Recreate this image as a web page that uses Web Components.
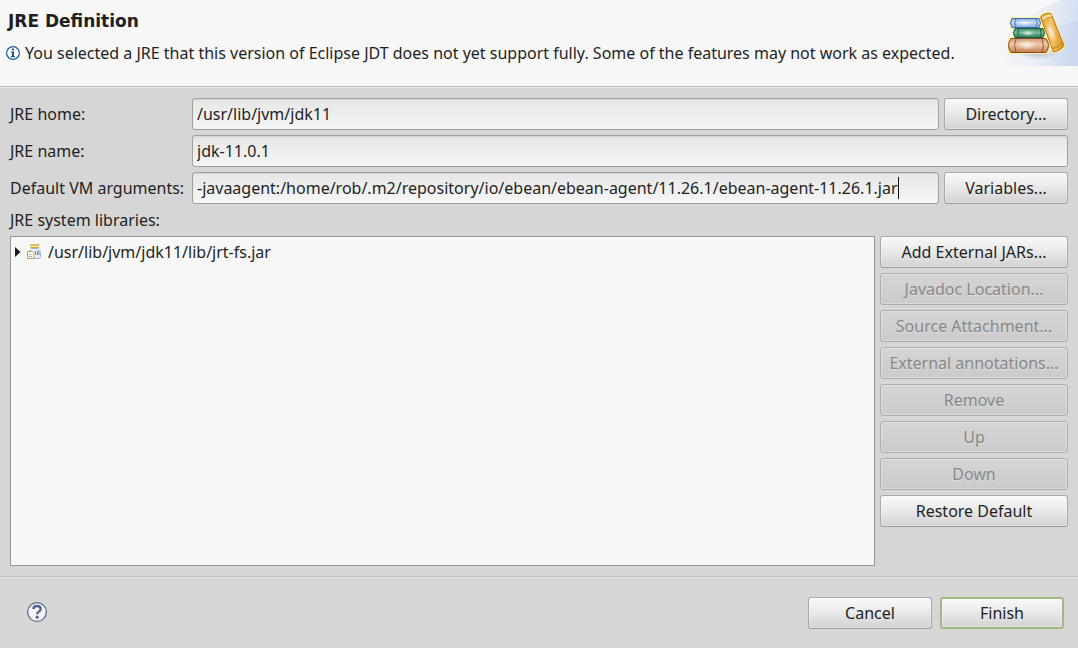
<!DOCTYPE html>
<html lang="en">
<head>
<meta charset="utf-8">
<title>JRE Definition</title>
<style>
  html, body { margin: 0; }
  body {
    font: 16px/22px "Noto Sans", "Open Sans", sans-serif;
    color: #1f1f1f;
    background: #d6d6d6;
  }
</style>
</head>
<body>
<jre-wizard></jre-wizard>

<template id="wizard-banner">
  <style>
    :host { display: flex; justify-content: space-between; min-height: 86px; background: #f7f7f7; border-bottom: 1px solid #bcbcbc; box-shadow: 0 1px #e4e4e4; }
    .text { padding: 9px 0 0 8px; }
    h1 { margin: 0; font: 700 17px/24px "DejaVu Sans", sans-serif; }
    p { margin: 9px 0 0 -3px; display: flex; align-items: center; gap: 4px; }
    .info { flex: none; width: 16px; height: 16px; }
    .art { flex: none; width: 75px; height: 66px; }
  </style>
  <div class="text">
    <h1><slot name="title"></slot></h1>
    <p>
      <svg class="info" viewBox="0 0 16 16" aria-hidden="true">
        <circle cx="8" cy="8" r="6.4" fill="#fff" stroke="#1c5a96" stroke-width="1.2"/>
        <path d="M7 3.6h2v1.8H7zM6 6.6h3v4.4h1v1.2H6V11h1V7.8H6z" fill="#1c5a96"/>
      </svg>
      <span><slot></slot></span>
    </p>
  </div>
  <svg class="art" viewBox="0 0 75 66" aria-hidden="true">
    <defs>
      <linearGradient id="sky" x1="0" y1="0" x2="1" y2="0.1"><stop offset="0" stop-color="#f5f6f8"/><stop offset=".5" stop-color="#eceff6"/><stop offset="1" stop-color="#cbd8ef"/></linearGradient>
      <linearGradient id="blue" x1="0" y1="0" x2="0" y2="1"><stop offset="0" stop-color="#8fb2e4"/><stop offset=".45" stop-color="#c3d8f5"/><stop offset="1" stop-color="#85a9de"/></linearGradient>
      <linearGradient id="green" x1="0" y1="0" x2="0" y2="1"><stop offset="0" stop-color="#42936d"/><stop offset=".45" stop-color="#79b898"/><stop offset="1" stop-color="#2b7c56"/></linearGradient>
      <linearGradient id="brown" x1="0" y1="0" x2="0" y2="1"><stop offset="0" stop-color="#d29a74"/><stop offset=".4" stop-color="#eec9ae"/><stop offset="1" stop-color="#c07c50"/></linearGradient>
      <linearGradient id="gold" x1="0" y1="0" x2="1" y2="0"><stop offset="0" stop-color="#e0a035"/><stop offset=".45" stop-color="#f3c468"/><stop offset="1" stop-color="#dc9424"/></linearGradient>
      <radialGradient id="shade"><stop offset="0" stop-color="#a9adb9"/><stop offset="1" stop-color="#a9adb9" stop-opacity="0"/></radialGradient>
      <radialGradient id="shine"><stop offset="0" stop-color="#fff" stop-opacity=".8"/><stop offset="1" stop-color="#fff" stop-opacity="0"/></radialGradient>
    </defs>
    <path d="M0 66C6 36 26 9 58 0h17v66z" fill="url(#sky)"/>
    <path d="M44 35Q56 23 75 21V0H58Q48 3 40 8z" fill="#fff" opacity=".2"/>
    <ellipse cx="35" cy="53" rx="21" ry="7" fill="url(#shade)" opacity=".7"/>
    <g fill="#fbf3a8" stroke="#fbf3a8" stroke-width="3" stroke-linejoin="round">
      <path d="M8 18.500h29v9H8zM11 28.500h31v9H11zM6 38.500h39v14H6zM37 16.500q5-4 11-3l13 33q-4 5-11 5z"/>
    </g>
    <path d="M9 18.500h27q3 4.500 0 9H9q-3-4.500 0-9z" fill="url(#blue)" stroke="#3e6bae"/>
    <path d="M13 19q-2.500 4 0 8M33 19q2.500 4 0 8" fill="none" stroke="#5079b7"/>
    <ellipse cx="22" cy="23" rx="8" ry="3" fill="url(#shine)"/>
    <path d="M12 28.500h28q3 4.500 0 9H12q-3-4.500 0-9z" fill="url(#green)" stroke="#176141"/>
    <path d="M16 29q-2.500 4 0 8M37 29q2.500 4 0 8" fill="none" stroke="#176141"/>
    <ellipse cx="25" cy="33" rx="7" ry="3" fill="url(#shine)"/>
    <path d="M8 38.500h35q5 7 0 14H8q-5-7 0-14z" fill="url(#brown)" stroke="#87461f"/>
    <path d="M13 39q-3 6.500 0 13M39 39q3 6.500 0 13" fill="none" stroke="#9b5a34"/>
    <ellipse cx="24" cy="45" rx="10" ry="5" fill="url(#shine)"/>
    <path d="M37.500 17q4-4.500 10.500-3.500l13 32q-3.500 5.500-10.500 6.500z" fill="url(#gold)" stroke="#b9770e"/>
    <path d="M39 20.500q4-4 10.500-3.500M49 48.500q7-1 10.500-6.500" fill="none" stroke="#b9770e"/>
    <path d="M39.500 19q4-3.500 9-3.500" fill="none" stroke="#fbe6b4" stroke-width="2"/>
    <ellipse cx="48" cy="32" rx="4" ry="11" transform="rotate(-22 48 32)" fill="url(#shine)"/>
  </svg>
</template>

<template id="push-button">
  <style>
    :host { display: block; }
    button {
      box-sizing: border-box; display: block; width: 100%; height: 32px; margin: 0; padding: 0 8px;
      font: inherit; color: inherit; white-space: nowrap;
      border: 1px solid #a9a9a9; border-bottom-color: #9d9d9d; border-radius: 3px;
      background: linear-gradient(#f9f9f9, #eaeaea 45%, #d2d2d2);
      box-shadow: inset 0 0 0 1px rgba(255, 255, 255, .3);
    }
    button:disabled { color: #888; background: linear-gradient(#d5d5d5, #cbcbcb); text-shadow: 0 1px #dedede; border-color: #adadad; }
    :host([default]) button { border: 2px solid #9cb97e; padding: 0 7px; }
  </style>
  <button type="button"><slot></slot></button>
</template>

<template id="form-field">
  <style>
    :host { display: grid; grid-template-columns: 177px minmax(0, 1fr) auto; column-gap: 5px; align-items: center; }
    label { white-space: nowrap; }
    .box {
      box-sizing: border-box; display: flex; align-items: center; height: 32px; padding: 0 4px;
      border: 1px solid #a0a0a0; border-radius: 3px;
      background: linear-gradient(#e6e6e6, #f6f6f6);
      box-shadow: inset 0 1px 1px #d2d2d2;
    }
    :host([wide]) .box { grid-column: 2 / -1; }
    input { flex: 1; min-width: 0; height: 24px; margin: 0; padding: 0; border: 0; outline: 0; background: none; font: inherit; color: inherit; }
    .caret { display: none; width: 1px; height: 22px; background: #111; }
    :host([caret]) input { flex: 0 1 auto; field-sizing: content; }
    :host([caret]) .caret { display: block; }
    ::slotted(*) { width: 124px; }
  </style>
  <label for="value"></label>
  <div class="box"><input id="value" type="text" spellcheck="false"><span class="caret"></span></div>
  <slot></slot>
</template>

<template id="library-tree">
  <style>
    :host { display: block; box-sizing: border-box; background: #f7f7f7; border: 1px solid #969896; }
    ul { list-style: none; margin: 0; padding: 4px 3px; }
    li { display: flex; align-items: center; }
    .arrow { flex: none; width: 8px; height: 12px; }
    .jar { flex: none; width: 16px; height: 16px; margin: 0 6px 0 4px; }
  </style>
  <ul role="tree" aria-label="JRE system libraries">
    <li role="treeitem" aria-expanded="false">
      <svg class="arrow" viewBox="0 0 8 12" aria-hidden="true"><path d="M1 1l5.500 5L1 11z" fill="#1a1a1a"/></svg>
      <svg class="jar" viewBox="0 0 16 16" aria-hidden="true">
        <path d="M5.500 4.500h6.500q2.500 2 2.500 4v4q0 2-2 2h-7q-2 0-2-2v-4q0-2.500 2-4z" fill="#e6eef8" stroke="#a3b6d0"/>
        <path d="M4 1h9.500" stroke="#d9ae3c" stroke-width="1.500"/>
        <path d="M5 2.500h7.500" stroke="#f8e7a2"/>
        <path d="M4.500 3.500h8.500" stroke="#d4a633"/>
        <path d="M9.500 7v4M11.500 7.500h1.500v3h-1.500z" fill="none" stroke="#6b7b93" stroke-width=".9"/>
        <path d="M1.500 7.500h4.500l2 2v5h-6.500z" fill="#fffbea" stroke="#bf9f5a"/>
        <path d="M3 10.500h2M3 12.500h3" stroke="#8fb0d8"/>
      </svg>
      <span><slot></slot></span>
    </li>
  </ul>
</template>

<template id="wizard-footer">
  <style>
    :host { display: flex; align-items: center; justify-content: space-between; padding: 20px 14px 19px 26px; border-top: 1px solid #c3c3c3; box-shadow: inset 0 1px #e4e4e4; }
    .help { display: block; align-self: flex-start; margin: 4px 0 0; width: 22px; height: 22px; padding: 0; border: 0; background: none; }
    .actions { display: flex; gap: 8px; }
    ::slotted(*) { width: 124px; }
  </style>
  <button class="help" type="button" aria-label="Help">
    <svg width="22" height="22" viewBox="0 0 22 22" aria-hidden="true">
      <circle cx="11" cy="11" r="9.400" fill="#f4f4f4" stroke="#5b6d8d" stroke-width="1.300"/>
      <path d="M7.500 8q0-3 3.500-3 3.700 0 3.700 3 0 1.700-2 2.800-1.500.8-1.500 2.400" fill="none" stroke="#52658a" stroke-width="2.300"/>
      <circle cx="11.200" cy="16.200" r="1.600" fill="#52658a"/>
    </svg>
  </button>
  <div class="actions"><slot></slot></div>
</template>

<template id="jre-wizard">
  <style>
    :host { display: flex; flex-direction: column; min-height: 100vh; }
    main { flex: 1; display: flex; flex-direction: column; padding: 11px 10px 10px; }
    .fields { display: grid; gap: 5px; }
    h2 { margin: 5px 0; font: inherit; }
    .libraries { flex: 1; display: grid; grid-template-columns: minmax(0, 1fr) 188px; gap: 5px; }
    .side { display: grid; gap: 5px; align-content: start; }
  </style>
  <wizard-banner>
    <span slot="title">JRE Definition</span>You selected a JRE that this version of Eclipse JDT does not yet support fully. Some of the features may not work as expected.
  </wizard-banner>
  <main>
    <div class="fields">
      <form-field label="JRE home:" value="/usr/lib/jvm/jdk11"><push-button>Directory...</push-button></form-field>
      <form-field label="JRE name:" value="jdk-11.0.1" wide></form-field>
      <form-field label="Default VM arguments:" value="-javaagent:/home/rob/.m2/repository/io/ebean/ebean-agent/11.26.1/ebean-agent-11.26.1.jar" caret><push-button>Variables...</push-button></form-field>
    </div>
    <h2>JRE system libraries:</h2>
    <div class="libraries">
      <library-tree>/usr/lib/jvm/jdk11/lib/jrt-fs.jar</library-tree>
      <div class="side">
        <push-button>Add External JARs...</push-button>
        <push-button disabled>Javadoc Location...</push-button>
        <push-button disabled>Source Attachment...</push-button>
        <push-button disabled>External annotations...</push-button>
        <push-button disabled>Remove</push-button>
        <push-button disabled>Up</push-button>
        <push-button disabled>Down</push-button>
        <push-button>Restore Default</push-button>
      </div>
    </div>
  </main>
  <wizard-footer>
    <push-button>Cancel</push-button>
    <push-button default>Finish</push-button>
  </wizard-footer>
</template>

<script>
  class TemplateElement extends HTMLElement {
    constructor() {
      super();
      this.attachShadow({ mode: "open" })
        .append(document.getElementById(this.localName).content.cloneNode(true));
    }
  }
  class PushButton extends TemplateElement {
    connectedCallback() {
      this.shadowRoot.querySelector("button").disabled = this.hasAttribute("disabled");
    }
  }
  class FormField extends TemplateElement {
    connectedCallback() {
      this.shadowRoot.querySelector("label").textContent = this.getAttribute("label");
      this.shadowRoot.querySelector("input").value = this.getAttribute("value");
    }
  }
  customElements.define("push-button", PushButton);
  customElements.define("form-field", FormField);
  customElements.define("wizard-banner", class extends TemplateElement {});
  customElements.define("library-tree", class extends TemplateElement {});
  customElements.define("wizard-footer", class extends TemplateElement {});
  customElements.define("jre-wizard", class extends TemplateElement {});
</script>
</body>
</html>
